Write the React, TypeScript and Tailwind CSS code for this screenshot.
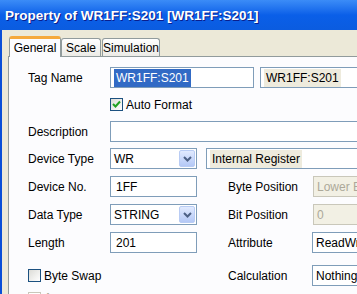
import React from 'react';

const Chevron = () => (
    <svg width="9" height="6" viewBox="0 0 9 6">
        <path d="M1 1 L4.5 4.5 L8 1" fill="none" stroke="#4D6185" strokeWidth="2" />
    </svg>
);

const Check = () => (
    <svg width="9" height="9" viewBox="0 0 9 9">
        <path d="M1 4 L3.5 6.5 L8 1.5" fill="none" stroke="#21A121" strokeWidth="2" />
    </svg>
);

const Box = ({ w, children, cls = '' }: { w?: string; children?: React.ReactNode; cls?: string }) => (
    <div className={`h-[21px] shrink-0 border border-[#7F9DB9] bg-white flex items-center px-[3px] whitespace-nowrap overflow-hidden ${w ?? 'flex-1'} ${cls}`}>
        {children}
    </div>
);

const Combo = ({ value }: { value: string }) => (
    <div className="h-[21px] w-[87px] shrink-0 border border-[#7F9DB9] bg-white flex items-center justify-between pl-[3px] pr-[1px]">
        <span>{value}</span>
        <div className="w-[16px] h-[17px] rounded-[2px] border border-[#B9CCF4] bg-gradient-to-b from-[#E1EAFE] to-[#B4C8F6] flex items-center justify-center">
            <Chevron />
        </div>
    </div>
);

const Disabled = ({ children }: { children: React.ReactNode }) => (
    <div className="h-[21px] flex-1 border border-[#C9C7BA] bg-[#F2F0E4] flex items-center px-[3px] text-[#ACA899] whitespace-nowrap overflow-hidden">
        {children}
    </div>
);

const Label = ({ children, w = 'w-[82px]' }: { children: React.ReactNode; w?: string }) => (
    <div className={`${w} shrink-0 whitespace-nowrap`}>{children}</div>
);

export default function App() {
    return (
        <div className="w-[357px] h-[294px] overflow-hidden bg-[#ECE9D8] flex flex-col text-[12px] text-black" style={{ fontFamily: '"Liberation Sans", Arial, sans-serif' }}>
            <div className="h-[30px] shrink-0 bg-gradient-to-b from-[#3B8CF7] via-[#0A5FE8] to-[#0B5CE0] flex items-center pl-[5px] pt-[2px]">
                <span className="text-white font-bold text-[13.5px] [text-shadow:1px_1px_0_#0A1E8C]">Property of WR1FF:S201 [WR1FF:S201]</span>
            </div>
            <div className="flex-1 flex border-l-[2px] border-[#0A4FD8]">
                <div className="flex-1 flex flex-col pl-[6px]">
                    <div className="flex items-end h-[27px] pl-[1px] mt-[-1px]">
                        <div className="relative z-10 h-[21px] w-[52px] mb-[-1px] bg-[#FCFCFE] border-x border-[#919B9C] border-t-[3px] border-t-[#F5A93C] rounded-t-[3px] flex items-center justify-center">General</div>
                        <div className="h-[18px] w-[40px] bg-gradient-to-b from-white to-[#ECEBE6] border border-b-0 border-[#919B9C] rounded-t-[3px] flex items-center justify-center">Scale</div>
                        <div className="h-[18px] w-[58px] ml-[1px] bg-gradient-to-b from-white to-[#ECEBE6] border border-b-0 border-[#919B9C] rounded-t-[3px] flex items-center justify-center">Simulation</div>
                    </div>
                    <div className="flex-1 bg-[#FCFCFE] border-t border-l border-[#919B9C] pl-[19px] pt-[10px] flex flex-col">
                        <div className="flex items-center">
                            <Label>Tag Name</Label>
                            <Box w="w-[144px]"><span className="bg-[#316AC5] text-white px-[2px]">WR1FF:S201</span></Box>
                            <Box cls="ml-[6px]"><span className="bg-[#EEEBDD] px-[2px]">WR1FF:S201</span></Box>
                        </div>
                        <div className="flex items-center h-[21px] mt-[6px] pl-[82px]">
                            <div className="w-[13px] h-[13px] border border-[#1C5180] bg-gradient-to-br from-[#DCDCD7] to-white flex items-center justify-center">
                                <Check />
                            </div>
                            <span className="ml-[3px]">Auto Format</span>
                        </div>
                        <div className="flex items-center mt-[6px]">
                            <Label>Description</Label>
                            <Box />
                        </div>
                        <div className="flex items-center mt-[6px]">
                            <Label>Device Type</Label>
                            <Combo value="WR" />
                            <Box cls="ml-[9px]"><span className="bg-[#EEEBDD] px-[2px]">Internal Register</span></Box>
                        </div>
                        <div className="flex items-center mt-[7px]">
                            <Label>Device No.</Label>
                            <Box w="w-[87px]"><span className="pl-[2px]">1FF</span></Box>
                            <Label w="w-[85px] ml-[31px]">Byte Position</Label>
                            <Disabled>Lower Byte</Disabled>
                        </div>
                        <div className="flex items-center mt-[7px]">
                            <Label>Data Type</Label>
                            <Combo value="STRING" />
                            <Label w="w-[85px] ml-[31px]">Bit Position</Label>
                            <Disabled>0</Disabled>
                        </div>
                        <div className="flex items-center mt-[7px]">
                            <Label>Length</Label>
                            <Box w="w-[87px]"><span className="pl-[2px]">201</span></Box>
                            <Label w="w-[84px] ml-[31px]">Attribute</Label>
                            <Box>ReadWrite</Box>
                        </div>
                        <div className="flex items-center mt-[12px]">
                            <div className="w-[82px] shrink-0 flex items-center">
                                <div className="w-[13px] h-[13px] border border-[#1C5180] bg-gradient-to-br from-[#DCDCD7] to-white" />
                                <span className="ml-[3px]">Byte Swap</span>
                            </div>
                            <div className="w-[87px] shrink-0" />
                            <Label w="w-[84px] ml-[31px]">Calculation</Label>
                            <Box>Nothing</Box>
                        </div>
                        <div className="flex items-center mt-[3px]">
                            <div className="w-[13px] h-[13px] border border-[#C9C7BA] bg-white" />
                            <span className="ml-[3px] text-[#ACA899]">Array</span>
                        </div>
                    </div>
                </div>
            </div>
        </div>
    );
}
